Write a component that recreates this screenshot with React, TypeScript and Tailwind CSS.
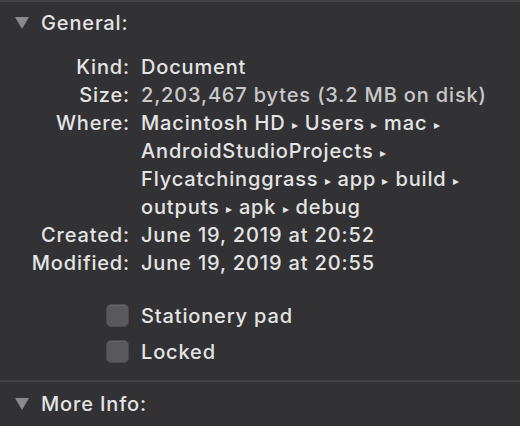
const Triangle = () => (
  <svg width="16" height="14" viewBox="0 0 16 14" className="shrink-0">
    <path d="M1 1 H15 L8 13 Z" fill="#8a8a8c" />
  </svg>
)

const Checkbox = () => (
  <div className="w-[23px] h-[23px] rounded-[5px] bg-[#59595b] border border-[#4c4c4e] shadow-[inset_0_1px_0_rgba(255,255,255,0.08)]" />
)

type Row = { label: string; lines: string[]; dim?: boolean }

const rows: Row[] = [
  { label: "Kind:", lines: ["Document"] },
  { label: "Size:", lines: ["2,203,467 bytes (3.2 MB on disk)"], dim: true },
  {
    label: "Where:",
    lines: [
      "Macintosh HD ▸ Users ▸ mac ▸",
      "AndroidStudioProjects ▸",
      "Flycatchinggrass ▸ app ▸ build ▸",
      "outputs ▸ apk ▸ debug",
    ],
  },
  { label: "Created:", lines: ["June 19, 2019 at 20:52"] },
  { label: "Modified:", lines: ["June 19, 2019 at 20:55"] },
]

function PathLine({ text }: { text: string }) {
  const parts = text.split("▸")
  return (
    <div className="h-[28px] leading-[28px] whitespace-nowrap">
      {parts.map((p, i) => (
        <span key={i}>
          {p}
          {i < parts.length - 1 && <span className="text-[12px] align-[1px]">▸</span>}
        </span>
      ))}
    </div>
  )
}

export default function App() {
  return (
    <div
      className="w-[520px] h-[426px] bg-[#323234] text-[#e4e4e4] text-[20px] font-medium tracking-[0.85px] overflow-hidden flex flex-col"
      style={{ fontFamily: "Inter, 'Noto Sans', sans-serif" }}
    >
      <div className="h-[2px] bg-[#434345]" />
      <div className="flex items-center gap-[11px] pl-[14px] h-[40px] mt-[1px]">
        <Triangle />
        <span>General:</span>
      </div>
      <div className="mt-[10px] flex flex-col">
        {rows.map((r) => (
          <div key={r.label} className="flex">
            <div className="w-[131px] text-right pr-[1px] h-[28px] leading-[28px]">{r.label}</div>
            <div className={`pl-[10px] ${r.dim ? "text-[#c9c9cb]" : ""}`}>
              {r.lines.map((l) => (
                <PathLine key={l} text={l} />
              ))}
            </div>
          </div>
        ))}
      </div>
      <div className="mt-[27px] flex flex-col gap-[13px] pl-[106px]">
        <div className="flex items-center gap-[12px] h-[23px]">
          <Checkbox />
          <span>Stationery pad</span>
        </div>
        <div className="flex items-center gap-[12px] h-[23px]">
          <Checkbox />
          <span>Locked</span>
        </div>
      </div>
      <div className="mt-[17px] h-[2px] bg-[#434345]" />
      <div className="flex items-center gap-[11px] pl-[14px] h-[44px]">
        <Triangle />
        <span>More Info:</span>
      </div>
    </div>
  )
}
